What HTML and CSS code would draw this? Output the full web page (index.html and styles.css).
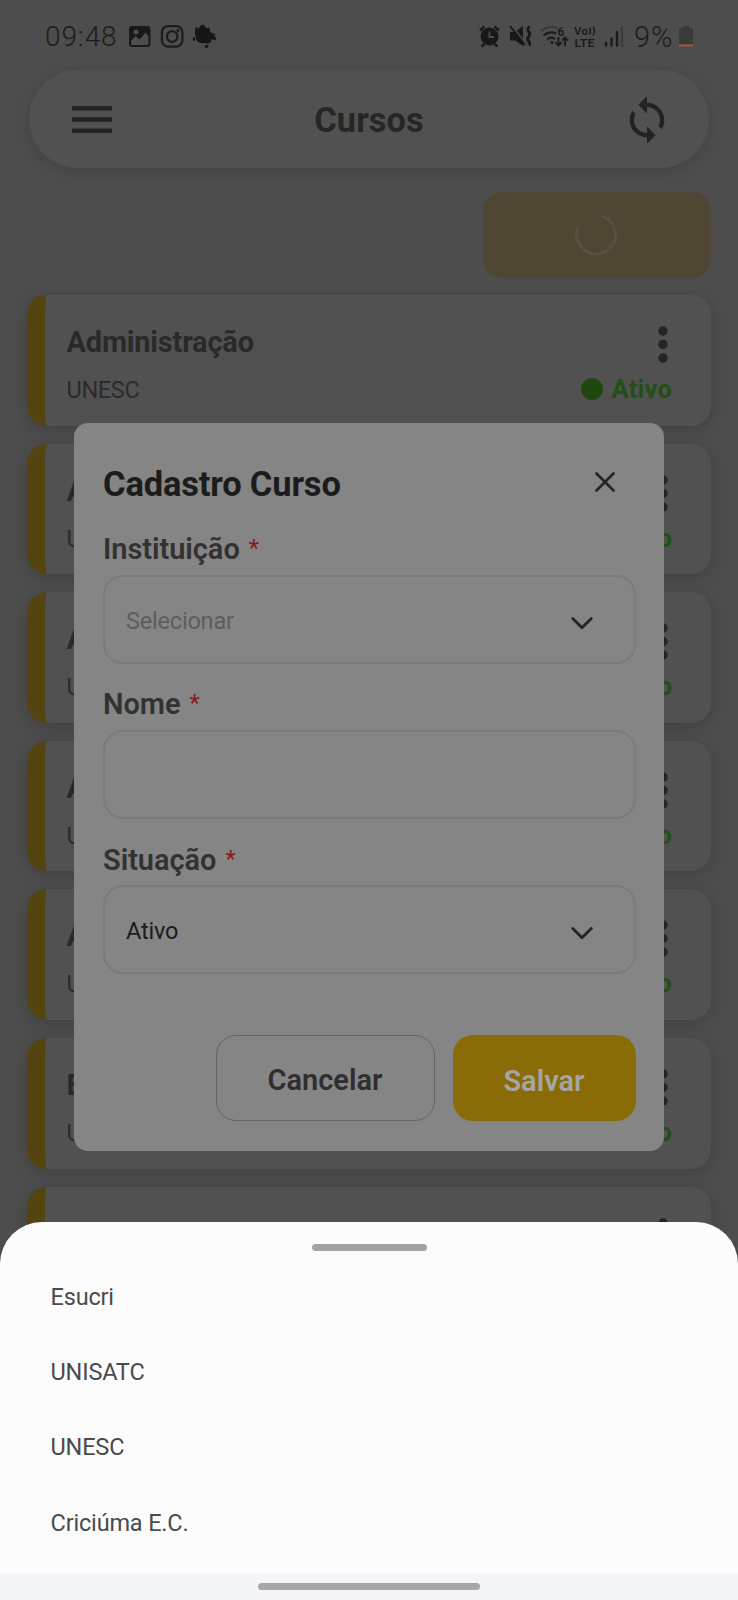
FILE: index.html
```html
<!DOCTYPE html>
<html lang="pt-BR">
<head>
<meta charset="utf-8">
<title>Cursos</title>
<link rel="stylesheet" href="styles.css">
</head>
<body>
<div class="screen">
  <div class="status-bar">
    <span class="clock">09:48</span>
    <svg class="notifications" width="90" height="26" viewBox="0 0 90 26">
      <path fill="#191919" fill-rule="evenodd" d="M3 2h15.500a3 3 0 0 1 3 3v15a3 3 0 0 1-3 3H3a3 3 0 0 1-3-3V5a3 3 0 0 1 3-3zM2 17v2.500q0 1.500 1.500 1.500h14.500q1.500 0 1.500-1.500v-7.500l-3-3.500-6 7-4-3.500zM4.500 8a2.500 2.500 0 1 0 5 0a2.500 2.500 0 1 0-5 0z"/>
      <g fill="none" stroke="#1c1c1c" stroke-width="2.200">
        <rect x="32.900" y="2.100" width="20.500" height="20.500" rx="6"/>
        <circle cx="43.200" cy="12.500" r="5.300"/>
      </g>
      <circle cx="49" cy="6.500" r="1.500" fill="#1c1c1c"/>
      <path fill="#161616" d="M66.500 3l3.500 1.500L71 2l3-1.500 2.500 2 1 2 3-1 .5 4 2 1.500 3.500 1-1 2 2 2.500-1 1.500-4-.5-.5 2.500-3 1.500-3-.5-2 .5-4-1-2.500-2-1-4.500-.5-3z"/>
      <ellipse cx="65" cy="15" rx="1.200" ry="2" fill="#161616"/>
      <path fill="#161616" d="M75.500 21.500l4-.8-.5 2.500-2.500 1z"/>
    </svg>
    <svg class="system-icons" width="150" height="26" viewBox="0 0 150 26">
      <g fill="none" stroke="#181818">
        <path stroke-width="2.400" d="M1 5.500l4.500-4M15.500 1.500l4.500 4M5.500 19l-3 2.500M15.500 19l3 2.500"/>
      </g>
      <circle cx="10.500" cy="11.500" r="9" fill="#181818"/>
      <path fill="none" stroke="#4d4d4d" stroke-width="1.800" d="M10.500 6.500v5.500h4.500"/>
      <path fill="#181818" d="M31 7h5l8-6v20l-8-5.500h-5z"/>
      <path fill="none" stroke="#4d4d4d" stroke-width="2.200" d="M32 0l14 18"/>
      <path fill="none" stroke="#181818" stroke-width="2" d="M31 1l15 19"/>
      <path fill="none" stroke="#181818" stroke-width="2.800" d="M50.500 1.500q-3 2.500-.8 5t0 5 0 5 .3 4"/>
      <path fill="none" stroke="#393939" stroke-width="2" d="M62 6q8-6 16-3"/>
      <g fill="none" stroke="#1b1b1b" stroke-width="2">
        <path d="M64.500 10.500q6-5 12.500-2M68 14.500q4-3.500 8-.5"/>
        <path stroke-width="1.800" d="M79.500 12v8.500m-3-3l3 3 3-3M86 21v-8.500m-3 3l3-3 3 3"/>
      </g>
      <circle cx="73" cy="17.500" r="1.500" fill="#1b1b1b"/>
      <text class="micro" x="78.500" y="10.500" font-size="12">6</text>
      <text class="micro" x="95" y="9.500" font-size="11.500" textLength="14">Vo</text>
      <path fill="none" stroke="#1e1e1e" stroke-width="1.600" d="M110.500 2.500q2 3.300 0 7M114 1.500q3 4.500 0 9"/>
      <text class="micro" x="95.500" y="21.500" font-size="11.500" textLength="20" lengthAdjust="spacingAndGlyphs">LTE</text>
      <g stroke-linecap="round" stroke-width="2.400">
        <path stroke="#1b1b1b" d="M127 18v2.500M132.500 13.500v7M138 7v13.500"/>
        <path stroke="#3c3c3c" d="M143 3v17.500"/>
      </g>
    </svg>
    <span class="percent">9%</span>
    <svg class="battery" width="16" height="24" viewBox="0 0 16 24">
      <path fill="#3a3a3a" d="M5 1h6v2h2q2 0 2 2v14H1V5q0-2 2-2h2z"/>
      <path fill="#a4543e" d="M1 19.500h14v2H1z"/>
    </svg>
  </div>

  <header class="topbar">
    <svg class="menu" width="40" height="28" viewBox="0 0 40 28"><path fill="#222" d="M0 0h40v4.500H0zM0 11.300h40v4.500H0zM0 22.500h40V27H0z"/></svg>
    <h1 class="topbar-title">Cursos</h1>
    <svg width="52" height="52" viewBox="0 0 24 24"><path fill="#222" d="M12 4V1L8 5l4 4V6c3.310 0 6 2.690 6 6 0 1.010-.25 1.970-.7 2.800l1.460 1.460C19.540 15.030 20 13.570 20 12c0-4.420-3.580-8-8-8zm0 14c-3.310 0-6-2.690-6-6 0-1.010.25-1.970.7-2.800L5.240 7.740C4.460 8.970 4 10.430 4 12c0 4.420 3.580 8 8 8v3l4-4-4-4v3z"/></svg>
  </header>

  <div class="loading-button">
    <svg width="44" height="44" viewBox="0 0 44 44"><path fill="none" stroke="#595140" stroke-width="3" d="M27.500 3A19.500 19.500 0 1 1 4 14.500"/></svg>
  </div>

  <main class="cards">
    <article class="card"><div><h2 class="card-title">Administração</h2><p class="card-sub">UNESC</p></div><div class="card-side"><svg class="dots" width="10" height="38" viewBox="0 0 10 38"><circle cx="5" cy="5" r="4.700"/><circle cx="5" cy="18.500" r="4.700"/><circle cx="5" cy="32" r="4.700"/></svg><span class="state">Ativo</span></div></article>
    <article class="card"><div><h2 class="card-title">A</h2><p class="card-sub">U</p></div><div class="card-side"><svg class="dots" width="10" height="38" viewBox="0 0 10 38"><circle cx="5" cy="5" r="4.700"/><circle cx="5" cy="18.500" r="4.700"/><circle cx="5" cy="32" r="4.700"/></svg><span class="state">Ativo</span></div></article>
    <article class="card"><div><h2 class="card-title">A</h2><p class="card-sub">U</p></div><div class="card-side"><svg class="dots" width="10" height="38" viewBox="0 0 10 38"><circle cx="5" cy="5" r="4.700"/><circle cx="5" cy="18.500" r="4.700"/><circle cx="5" cy="32" r="4.700"/></svg><span class="state">Ativo</span></div></article>
    <article class="card"><div><h2 class="card-title">A</h2><p class="card-sub">U</p></div><div class="card-side"><svg class="dots" width="10" height="38" viewBox="0 0 10 38"><circle cx="5" cy="5" r="4.700"/><circle cx="5" cy="18.500" r="4.700"/><circle cx="5" cy="32" r="4.700"/></svg><span class="state">Ativo</span></div></article>
    <article class="card"><div><h2 class="card-title">A</h2><p class="card-sub">U</p></div><div class="card-side"><svg class="dots" width="10" height="38" viewBox="0 0 10 38"><circle cx="5" cy="5" r="4.700"/><circle cx="5" cy="18.500" r="4.700"/><circle cx="5" cy="32" r="4.700"/></svg><span class="state">Ativo</span></div></article>
    <article class="card"><div><h2 class="card-title">E</h2><p class="card-sub">U</p></div><div class="card-side"><svg class="dots" width="10" height="38" viewBox="0 0 10 38"><circle cx="5" cy="5" r="4.700"/><circle cx="5" cy="18.500" r="4.700"/><circle cx="5" cy="32" r="4.700"/></svg><span class="state">Ativo</span></div></article>
    <article class="card"><div></div><div class="card-side"><svg class="dots" width="10" height="38" viewBox="0 0 10 38"><circle cx="5" cy="5" r="4.700"/><circle cx="5" cy="18.500" r="4.700"/><circle cx="5" cy="32" r="4.700"/></svg></div></article>
  </main>

  <section class="modal">
    <div class="modal-head">
      <h2 class="modal-title">Cadastro Curso</h2>
      <svg class="close" width="20" height="20" viewBox="0 0 20 20"><path fill="none" stroke="#242424" stroke-width="2.600" stroke-linecap="round" d="M1.500 1.500l17 17M18.500 1.500l-17 17"/></svg>
    </div>
    <div class="group">
      <div class="label">Instituição<span class="req">*</span></div>
      <div class="field"><span class="placeholder">Selecionar</span><svg width="22" height="13" viewBox="0 0 22 13"><path fill="none" stroke="#242424" stroke-width="2.800" stroke-linecap="round" stroke-linejoin="round" d="M1.700 1.500L11 10.800l9.300-9.300"/></svg></div>
    </div>
    <div class="group">
      <div class="label">Nome<span class="req">*</span></div>
      <div class="field"></div>
    </div>
    <div class="group">
      <div class="label">Situação<span class="req">*</span></div>
      <div class="field"><span class="value">Ativo</span><svg width="22" height="13" viewBox="0 0 22 13"><path fill="none" stroke="#242424" stroke-width="2.800" stroke-linecap="round" stroke-linejoin="round" d="M1.700 1.500L11 10.800l9.300-9.300"/></svg></div>
    </div>
    <div class="actions">
      <div class="btn btn-cancel">Cancelar</div>
      <div class="btn btn-save">Salvar</div>
    </div>
  </section>

  <section class="sheet">
    <div class="handle"></div>
    <ul class="options">
      <li>Esucri</li>
      <li>UNISATC</li>
      <li>UNESC</li>
      <li>Criciúma E.C.</li>
    </ul>
    <div class="navbar"><div class="nav-pill"></div></div>
  </section>
</div>
</body>
</html>
```
FILE: styles.css
```css
* { box-sizing: border-box; margin: 0; padding: 0; }
body { font-family: Roboto, "Liberation Sans", sans-serif; background: #4d4d4d; }
svg { display: block; flex: none; }
.screen { position: relative; width: 738px; height: 1600px; overflow: hidden; background: #4d4d4d; }

.status-bar { display: flex; height: 70px; padding: 0 43px 0 45px; color: #1c1c1c; font-size: 28px; font-weight: 350; line-height: 74px; white-space: nowrap; }
.clock { width: 84px; letter-spacing: .9px; }
.notifications { margin-top: 24px; }
.system-icons { margin: 25px 0 0 260px; }
.micro { fill: #1b1b1b; font-weight: 600; }
.percent { margin-left: 5px; width: 44px; font-size: 29px; letter-spacing: 1px; }
.battery { margin-top: 25px; }

.topbar { display: flex; align-items: center; justify-content: space-between; height: 98px; margin: 0 29px; padding: 1px 36px 0 43px; border-radius: 49px; background: #515151; box-shadow: 0 4px 16px rgba(0, 0, 0, .13); }
.topbar-title { margin-left: 5px; font-size: 34.500px; font-weight: 700; line-height: 40px; color: #262626; }

.loading-button { display: flex; align-items: center; justify-content: center; width: 228px; height: 86px; margin: 24px 27px 17px auto; padding-right: 3px; border-radius: 19px; background: #4f4733; }

.cards { display: flex; flex-direction: column; gap: 18px; padding: 0 27px 0 26.500px; }
.card { display: flex; flex: none; justify-content: space-between; height: 130.600px; padding: 26px 39px 0 22px; border-left: 18px solid #54440f; border-radius: 20px; background: #515151; box-shadow: 0 4px 16px rgba(0, 0, 0, .16); }
.card-title { font-size: 29px; font-weight: 700; line-height: 42px; letter-spacing: -.2px; color: #292929; }
.card-sub { margin-top: 6px; font-size: 23.500px; line-height: 43px; letter-spacing: -.35px; color: #2b2b2b; }
.card-side { display: flex; flex-direction: column; align-items: flex-end; padding-top: 5px; }
.dots { margin-right: 4.500px; fill: #242424; }
.state { display: flex; align-items: center; gap: 9px; margin-top: 7px; font-size: 25.500px; font-weight: 700; line-height: 36px; letter-spacing: .2px; color: #225014; }
.state::before { content: ""; width: 22px; height: 22px; border-radius: 50%; background: #1f4710; }

.modal { position: absolute; left: 74px; top: 423px; width: 590px; height: 728px; padding: 40px 28.500px 0 29px; border-radius: 14px; background: #858585; }
.modal-head { display: flex; justify-content: space-between; height: 62px; padding-right: 20.500px; }
.modal-title { font-size: 34.500px; font-weight: 700; line-height: 42px; letter-spacing: -.18px; color: #1c1c1c; }
.close { margin-top: 9px; }
.group { height: 155.400px; }
.label { display: flex; gap: 9px; height: 49.500px; font-size: 29px; font-weight: 600; line-height: 48px; letter-spacing: -.05px; color: #323232; }
.req { font-size: 24px; font-weight: 400; line-height: 46px; color: #861a1a; }
.field { display: flex; align-items: center; justify-content: space-between; height: 89px; padding: 3px 41px 0 21px; border: 2px solid #7b7b7b; border-radius: 20px; font-size: 23.500px; letter-spacing: -.2px; }
.field svg { margin-top: 5px; }
.placeholder { color: #5d5d5d; }
.value { color: #1c1c1c; }
.actions { display: flex; justify-content: flex-end; gap: 18px; margin-top: 44px; }
.btn { height: 86px; border-radius: 20px; font-size: 29px; font-weight: 600; line-height: 92px; text-align: center; }
.btn-cancel { width: 219px; border: 1.500px solid #636363; line-height: 89px; color: #2e2e2e; }
.btn-save { width: 183px; background: #896b08; color: #a5a5a5; }

.sheet { position: absolute; left: 0; top: 1222px; display: flex; flex-direction: column; width: 738px; height: 378px; padding-top: 22px; border-radius: 42px 42px 0 0; background: #fcfcfc; overflow: hidden; }
.handle { flex: none; align-self: center; width: 115px; height: 7px; border-radius: 4px; background: #a2a2a2; }
.options { padding: 9px 50.500px 0; list-style: none; font-size: 23.500px; line-height: 75.200px; letter-spacing: -.17px; color: #4b4b4b; }
.navbar { margin-top: auto; height: 27px; padding-top: 10px; background: #f4f5f8; }
.nav-pill { width: 222px; height: 7px; margin: 0 auto; border-radius: 4px; background: #a7a7a8; }
```
